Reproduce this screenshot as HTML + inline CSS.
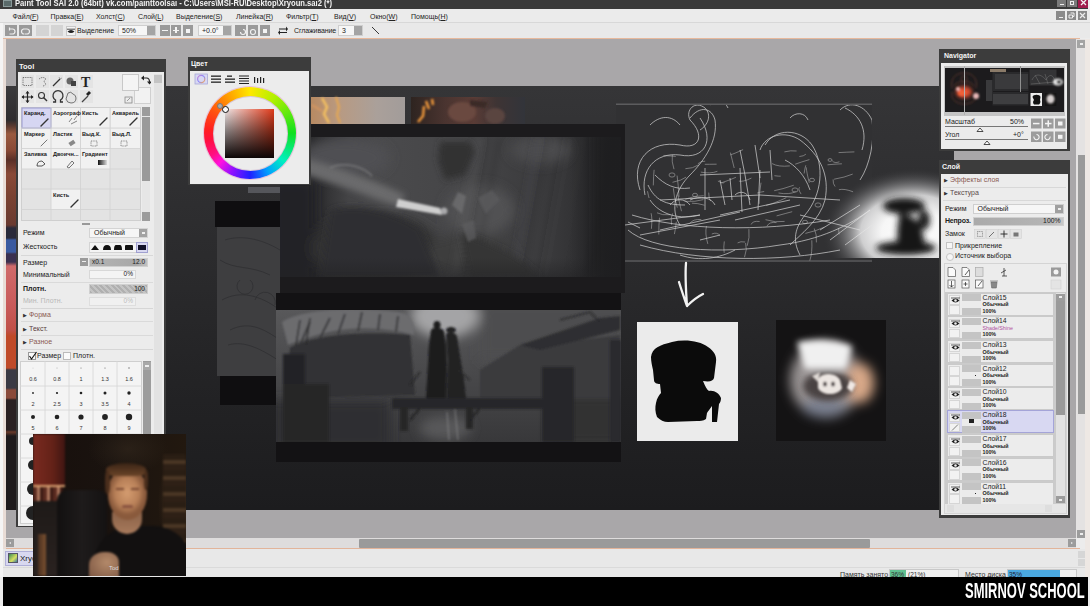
<!DOCTYPE html>
<html><head><meta charset="utf-8">
<style>
*{margin:0;padding:0;box-sizing:border-box}
html,body{width:1090px;height:606px;overflow:hidden;background:#ececec;font-family:"Liberation Sans",sans-serif;font-size:8px;color:#222}
.a{position:absolute}
#title{left:0;top:0;width:1090px;height:9px;background:#3a3a3a;color:#f4f4f4;font-weight:bold;font-size:9px;line-height:8px;white-space:nowrap;overflow:hidden}
#menu{left:0;top:9px;width:1090px;height:14px;background:#ebebeb;border-bottom:1px solid #d8d8d8}
#menu span{position:absolute;top:3.5px;font-size:7px;color:#222}
#tb{left:0;top:23px;width:1090px;height:15px;background:#e9e9e9}
#oline{left:3px;top:38px;width:1077px;height:1px;background:#e6b89c}
#cv{left:6px;top:39px;width:1070px;height:499px;background:#a9a7a9}
#dark{left:6px;top:86px;width:948px;height:424px;background:linear-gradient(#353537,#2b2b2d 40%,#232325 70%,#1c1c1e)}
.panel{background:#3c3c3c}
.ptitle{color:#f4f4f4;font-weight:bold;font-size:7px;position:absolute;left:3px;top:2px}
.pbody{position:absolute;background:#ececec}
#band{left:3px;top:577px;width:1085px;height:29px;background:#000}
#brand{left:965px;top:578px;height:29px;color:#fff;font-weight:bold;font-size:22px;line-height:26px;transform:scaleX(0.59);transform-origin:left center;white-space:nowrap}
</style></head><body>
<div class="a" id="title"><span style="position:absolute;left:3px;top:0;width:9px;height:7px;background:#5a6a6a;border:1px solid #8a9a9a"></span><span style="position:absolute;left:15px;top:-1px;transform:scaleX(.847);transform-origin:left top">Paint Tool SAI 2.0 (64bit) vk.com/painttoolsai - C:\Users\MSI-RU\Desktop\Xryoun.sai2 (*)</span>
<div style="position:absolute;left:1057px;top:0;width:9px;height:7px;background:#7a7a7a"><div style="position:absolute;left:3px;top:3.5px;width:4px;height:1.2px;background:#eee"></div></div><div style="position:absolute;left:1067px;top:0;width:10px;height:7px;background:#7a7a7a"><div style="position:absolute;left:3px;top:1px;width:4px;height:4px;border:1px solid #eee"></div></div><div style="position:absolute;left:1078px;top:0;width:10px;height:8px;background:#a01c4c"><svg style="position:absolute;left:2px;top:0" width="7" height="6"><path d="M1 0 L6 5 M6 0 L1 5" stroke="#f4f4f4" stroke-width="1.3"/></svg></div><div style="position:absolute;left:1088px;top:0;width:2px;height:9px;background:#eee"></div></div>
<div class="a" id="menu">
<span style="left:12.5px">Файл(<u>F</u>)</span><span style="left:50.5px">Правка(<u>E</u>)</span><span style="left:96px">Холст(<u>C</u>)</span><span style="left:138px">Слой(<u>L</u>)</span><span style="left:176px">Выделение(<u>S</u>)</span><span style="left:236px">Линейка(<u>R</u>)</span><span style="left:286px">Фильтр(<u>T</u>)</span><span style="left:334px">Вид(<u>V</u>)</span><span style="left:370px">Окно(<u>W</u>)</span><span style="left:411px">Помощь(<u>H</u>)</span>
<div style="position:absolute;left:1056px;top:2px;width:9px;height:9px;background:#8a8a8a"><div style="position:absolute;left:3px;top:5.5px;width:3.5px;height:1.3px;background:#eee"></div></div><div style="position:absolute;left:1067px;top:2px;width:9px;height:9px;background:#8a8a8a"><svg style="position:absolute;left:1px;top:1px" width="7" height="7"><path d="M2.5 1 h3.5 v3.5 h-1 M1 3 h3.5 v3 h-3.5z" fill="none" stroke="#eee" stroke-width="1"/></svg></div><div style="position:absolute;left:1078px;top:2px;width:9px;height:9px;background:#8a8a8a"><svg style="position:absolute;left:1px;top:1px" width="7" height="7"><path d="M1 1 L6 6 M6 1 L1 6" stroke="#eee" stroke-width="1.2"/></svg></div>
</div>
<div class="a" id="tb">
<div class="a" style="left:5px;top:2px;width:12px;height:11px;background:#9a9a9a"></div>
<div class="a" style="left:19px;top:2px;width:12.5px;height:11px;background:#9a9a9a"></div>
<svg class="a" style="left:7px;top:4px" width="24" height="8"><path d="M2.5 2 h3 a2.5 2.5 0 0 1 0 5 h-3 M2.5 0.5 v3" fill="none" stroke="#eee" stroke-width="1.2"/><path d="M16 2 h4 a2.5 2.5 0 0 1 0 5 h-2.5 M17 2 a2.5 2.5 0 0 0 0 5" fill="none" stroke="#eee" stroke-width="1.2"/></svg>
<div class="a" style="left:36px;top:2px;width:12.5px;height:11px;background:#d4d4d4"></div>
<div class="a" style="left:50.5px;top:2px;width:12.5px;height:11px;background:#d4d4d4"></div>
<div class="a" style="left:66px;top:2.5px;width:10px;height:10.5px;background:#f4f4f4;border:1px solid #c8c8c8"></div>
<svg class="a" style="left:67px;top:5px" width="8" height="7"><path d="M0.5 3.5 q3.5 -3 7 0 q-3.5 3 -7 0z" fill="#222"/><path d="M0 1.2 h8" stroke="#222" stroke-width=".8"/></svg>
<span class="a" style="left:77px;top:4px;font-size:7px">Выделение</span>
<div class="a" style="left:118px;top:2px;width:38px;height:11px;background:#f6f6f6;border:1px solid #cfcfcf"><span class="a" style="left:3px;top:0.5px;font-size:7px">50%</span><div class="a" style="right:0;top:0;width:8px;height:9px;background:#a4a4a4"></div></div>
<div class="a" style="left:159.5px;top:2px;width:10px;height:11px;background:#9a9a9a"><div class="a" style="left:2px;top:4.5px;width:6px;height:1.5px;background:#f4f4f4"></div></div>
<div class="a" style="left:171px;top:2px;width:10px;height:11px;background:#9a9a9a"><div class="a" style="left:2px;top:4.5px;width:6px;height:1.5px;background:#f4f4f4"></div><div class="a" style="left:4.2px;top:2.2px;width:1.5px;height:6px;background:#f4f4f4"></div></div>
<div class="a" style="left:182.5px;top:2px;width:10px;height:11px;background:#9a9a9a"><div class="a" style="left:3px;top:3.5px;width:4px;height:4px;background:#f4f4f4"></div></div>
<div class="a" style="left:198px;top:2px;width:34px;height:11px;background:#f6f6f6;border:1px solid #cfcfcf"><span class="a" style="left:3px;top:0.5px;font-size:7px">+0.0°</span><div class="a" style="right:0;top:0;width:8px;height:9px;background:#a4a4a4"></div></div>
<div class="a" style="left:235px;top:2px;width:11px;height:11px;background:#9a9a9a"></div>
<div class="a" style="left:248px;top:2px;width:10px;height:11px;background:#9a9a9a"></div>
<div class="a" style="left:259.5px;top:2px;width:10px;height:11px;background:#9a9a9a"><div class="a" style="left:3px;top:3.5px;width:4px;height:4px;background:#f4f4f4"></div></div>
<svg class="a" style="left:238px;top:5px" width="30" height="8"><path d="M2.5 4 a2.5 2.5 0 1 0 2.5 -2.5" fill="none" stroke="#f4f4f4" stroke-width="1.1"/><circle cx="15" cy="4" r="2.5" fill="none" stroke="#f4f4f4" stroke-width="1.1"/></svg>
<svg class="a" style="left:278px;top:3px" width="10" height="9"><path d="M1 3 h7 M2 6.5 h7" stroke="#222" stroke-width="1.2"/><path d="M8 0.5 l2 2.5 l-2 2.5z M2 4 l-2 2.5 l2 2.5z" fill="#222"/></svg>
<span class="a" style="left:294px;top:4px;font-size:7px;letter-spacing:-0.1px">Сглаживание</span>
<div class="a" style="left:338px;top:2px;width:25px;height:11px;background:#f6f6f6;border:1px solid #cfcfcf"><span class="a" style="left:3px;top:0.5px;font-size:7px">3</span><div class="a" style="right:0;top:0;width:8px;height:9px;background:#a4a4a4"></div></div>
<svg class="a" style="left:371px;top:3px" width="9" height="9"><path d="M1 1 l7 7" stroke="#222" stroke-width="0.9"/></svg>
</div>
<div class="a" id="oline"></div>
<div class="a" id="cv"></div>

<!-- canvas artwork -->
<div class="a" id="dark"></div>
<div class="a" style="left:6px;top:86px;width:10px;height:424px;background:linear-gradient(#3a3a3c 0,#2e2c2e 34px,#5a3a30 40px,#9a5a40 48px,#8a4a36 64px,#5a3028 74px,#8a4a38 88px,#7a4232 110px,#6a3a30 139px,#2a2a3a 142px,#2a2a3a 152px,#3a5aa0 154px,#3a5aa0 166px,#3a3050 168px,#3a3050 176px,#d06a6a 180px,#c85a5a 220px,#c05048 244px,#c04a28 250px,#c04a28 282px,#3a3a44 284px,#3a3a44 302px,#8a4a3a 304px,#8a4a3a 312px,#2a2022 314px,#2a2022 344px,#6a3a2a 346px,#1e1a1c 350px,#1e1a1c 424px)"></div>
<svg class="a" style="left:0;top:0" width="1090" height="606" viewBox="0 0 1090 606">
<defs>
 <filter id="b1" x="-20%" y="-20%" width="140%" height="140%"><feGaussianBlur stdDeviation="1.2"/></filter>
 <filter id="b2" x="-30%" y="-30%" width="160%" height="160%"><feGaussianBlur stdDeviation="3"/></filter>
 <filter id="b3" x="-50%" y="-50%" width="200%" height="200%"><feGaussianBlur stdDeviation="6"/></filter>
 <radialGradient id="glowA" cx="0.5" cy="0.5" r="0.5"><stop offset="0" stop-color="#fff"/><stop offset=".35" stop-color="#f6f6f6"/><stop offset=".58" stop-color="#cfcfd0"/><stop offset=".8" stop-color="#707072" stop-opacity=".6"/><stop offset="1" stop-color="#333335" stop-opacity="0"/></radialGradient>
 <radialGradient id="glowB" cx="0.5" cy="0.5" r="0.5"><stop offset="0" stop-color="#f0e8e4"/><stop offset=".5" stop-color="#d8c8c0"/><stop offset=".8" stop-color="#6a5a56" stop-opacity=".6"/><stop offset="1" stop-color="#141314" stop-opacity="0"/></radialGradient>
 <linearGradient id="p1base" x1="0" y1="0" x2="1" y2="0"><stop offset="0" stop-color="#222224"/><stop offset=".1" stop-color="#29292b"/><stop offset=".2" stop-color="#444446"/><stop offset=".3" stop-color="#4a4a4c"/><stop offset=".55" stop-color="#454547"/><stop offset=".75" stop-color="#3c3c3e"/><stop offset=".88" stop-color="#303032"/><stop offset="1" stop-color="#262628"/></linearGradient>
 <linearGradient id="p2base" x1="0" y1="0" x2="0" y2="1"><stop offset="0" stop-color="#58585a"/><stop offset=".5" stop-color="#48484a"/><stop offset="1" stop-color="#38383a"/></linearGradient>
 <linearGradient id="fadeB" x1="0" y1="0" x2="0" y2="1"><stop offset="0" stop-color="#222224" stop-opacity="0"/><stop offset="1" stop-color="#222224" stop-opacity=".55"/></linearGradient>
 <linearGradient id="fadeR" x1="0" y1="0" x2="1" y2="0"><stop offset="0" stop-color="#1e1e20" stop-opacity="0"/><stop offset=".7" stop-color="#1e1e20" stop-opacity=".85"/><stop offset="1" stop-color="#1e1e20"/></linearGradient>
 <clipPath id="c1"><rect x="280" y="137" width="341" height="140"/></clipPath>
 <clipPath id="c2"><rect x="276" y="310" width="345" height="132"/></clipPath>
 <clipPath id="c3"><rect x="616" y="105" width="256" height="156"/></clipPath>
 <clipPath id="c4"><rect x="776" y="320" width="110" height="121"/></clipPath>
 <clipPath id="c5"><rect x="820" y="150" width="119" height="108"/></clipPath>
</defs>
<!-- orange thumbs -->
<defs><linearGradient id="th1" x1="0" y1="0" x2="1" y2="0"><stop offset="0" stop-color="#b88a62"/><stop offset=".3" stop-color="#b89a82"/><stop offset=".7" stop-color="#aaa09a"/><stop offset="1" stop-color="#a29c9a"/></linearGradient>
<linearGradient id="th2" x1="0" y1="0" x2="1" y2="0"><stop offset="0" stop-color="#2e2420"/><stop offset=".3" stop-color="#4a3430"/><stop offset=".55" stop-color="#5a3c36"/><stop offset=".75" stop-color="#3e3434"/><stop offset="1" stop-color="#32343a"/></linearGradient></defs>
<rect x="311" y="97" width="94" height="27" fill="url(#th1)"/>
<g filter="url(#b1)"><path d="M322 98 l5 9 l-3 7 l5 9" stroke="#f4c060" stroke-width="2.5" fill="none"/><path d="M336 97 l3 10 l-2 8 l3 8" stroke="#e8a850" stroke-width="2" fill="none"/><path d="M312 105 l10 6" stroke="#d89860" stroke-width="2" fill="none"/></g>
<rect x="411" y="97" width="114" height="27" fill="url(#th2)"/>
<g filter="url(#b1)"><path d="M418 122 l5 -6 l1 -10 M426 101 l3 8 M432 99 l1 6" stroke="#f0983a" stroke-width="2.5" fill="none"/><ellipse cx="462" cy="112" rx="14" ry="10" fill="#6a4840"/><ellipse cx="495" cy="116" rx="10" ry="8" fill="#5a4440"/><path d="M470 100 l18 2 l-3 6 l-15 -2z" fill="#3a2c28"/></g>
<!-- sketch left -->
<rect x="215" y="201" width="65" height="26" fill="#0f0e10"/>
<rect x="217" y="227" width="63" height="149" fill="#3e3e40"/>
<g stroke="#2a2a2c" stroke-width=".7" fill="none" opacity=".8"><path d="M225 240 C240 235 260 238 280 250"/><path d="M222 300 C240 290 260 295 280 310"/><path d="M230 330 C250 320 265 330 280 340 M228 345 C245 340 262 350 278 360"/><path d="M240 280 a8 8 0 1 0 10 0"/><path d="M255 300 a10 10 0 1 1 20 5"/><path d="M220 260 C235 270 250 265 270 275"/></g>
<rect x="220" y="376" width="56" height="29" fill="#0f0e10"/>
<!-- sketch ship -->
<rect x="616" y="104" width="256" height="158" fill="#313133"/>
<rect x="616" y="103.5" width="256" height="1.5" fill="#5c5c5e"/>
<rect x="616" y="260" width="256" height="2" fill="#4e4e50"/>
<!-- glow silhouette -->
<g clip-path="url(#c5)">
<ellipse cx="914" cy="232" rx="92" ry="64" fill="url(#glowA)"/>
<g filter="url(#b2)">
 <ellipse cx="904" cy="206" rx="21" ry="8" fill="#121212"/>
 <ellipse cx="924" cy="220" rx="6" ry="10" fill="#1a1a1a"/>
 <path d="M900 212 C908 216 916 216 920 226 C924 236 926 244 922 248 L898 248 C896 236 898 222 900 212z" fill="#161616"/>
 <ellipse cx="906" cy="248" rx="30" ry="7" fill="#181818"/>
</g>
</g>
<g clip-path="url(#c3)" stroke="#e6e6e6" stroke-width=".75" fill="none" opacity=".85">
<path d="M640 190 C630 160 650 140 680 145 C700 150 705 135 690 120 C685 110 695 100 705 108 C712 115 708 125 700 130"/>
<path d="M645 195 C640 170 655 152 680 155 C705 160 715 140 700 118"/>
<path d="M690 118 C700 105 712 108 715 120 C718 140 705 160 690 175 C675 190 670 210 680 225"/>
<path d="M650 200 C660 215 680 220 700 215"/>
<path d="M655 175 C665 185 675 190 690 188"/>
<path d="M648 185 C655 200 665 205 685 205"/>
<path d="M760 150 C765 135 785 130 800 140 C820 155 830 175 825 200 C820 220 800 235 790 245"/>
<path d="M765 145 C775 128 800 128 812 145 C825 165 822 195 805 215 C795 228 792 240 800 255"/>
<path d="M785 160 C795 165 805 175 810 190"/>
<path d="M840 110 C850 100 865 105 872 120 C875 140 870 165 860 180"/>
<path d="M845 108 C860 115 868 130 862 150"/>
<path d="M628 230 C650 250 720 255 780 245 C820 240 850 225 870 210"/>
<path d="M632 215 C680 230 760 232 830 220"/>
<path d="M640 245 C700 262 780 262 840 250"/>
<path d="M660 200 L760 195 L840 200"/>
<path d="M700 175 L770 172 M705 168 L705 210 M740 168 L742 212 M760 170 L758 210"/>
<path d="M720 180 L725 205 M730 178 L732 200 M745 175 L750 205"/>
<path d="M740 150 L745 175 M755 145 L760 178 M770 150 L772 180"/>
<path d="M625 225 L700 215 M640 235 L720 220 M660 230 L740 212"/>
<path d="M720 215 L790 200 M735 220 L800 205"/>
<path d="M820 230 L860 205 M830 240 L870 210 M845 245 L872 225"/>
<path d="M800 215 L840 225 L860 230"/>
<path d="M628 222 L640 228 M700 240 L720 235"/>
<path d="M690 200 C700 195 712 198 715 205 M670 205 C675 198 685 198 690 205"/>
<path d="M735 195 C740 190 748 192 750 200"/>
<path d="M650 125 C660 115 672 115 680 125 M710 105 C715 100 725 100 728 108"/>
<path d="M790 118 C795 112 805 112 808 120"/>
<path d="M680 255 C700 262 720 258 735 250"/>
</g><g clip-path="url(#c3)" stroke="#dcdcdc" stroke-width=".6" fill="none" opacity=".7">
<path d="M704.8 164.3 Q708.0 164.3 716.6 164.2"/>
<path d="M647.5 191.2 Q648.7 197.3 649.1 198.0"/>
<path d="M766.1 205.4 Q773.5 203.7 786.3 197.7"/>
<path d="M697.9 163.7 Q702.0 160.6 705.2 161.2"/>
<path d="M659.5 217.7 Q658.7 225.0 658.8 234.5"/>
<path d="M757.1 193.1 Q759.5 192.2 764.2 191.5"/>
<path d="M708.7 192.6 Q708.7 199.4 710.7 201.0"/>
<path d="M724.3 241.4 Q723.4 247.1 724.2 252.8"/>
<path d="M799.4 156.5 Q803.9 156.2 805.9 154.2"/>
<path d="M838.6 228.1 Q838.6 229.3 839.1 234.4"/>
<path d="M663.4 155.6 Q672.1 156.0 675.8 156.4"/>
<path d="M673.3 188.2 Q673.9 197.4 677.3 207.6"/>
<path d="M711.8 234.0 Q716.9 231.8 720.0 235.5"/>
<path d="M806.2 167.3 Q806.7 172.8 809.3 182.8"/>
<path d="M811.8 240.3 Q812.5 252.7 809.8 260.6"/>
<path d="M799.6 187.3 Q797.7 188.9 801.1 194.1"/>
<path d="M672.5 182.3 Q682.0 180.4 686.1 177.1"/>
<path d="M654.1 169.8 Q653.5 175.3 653.3 185.4"/>
<path d="M737.6 242.9 Q740.5 241.1 745.2 242.0"/>
<path d="M805.8 165.3 Q805.2 166.6 804.1 173.5"/>
<path d="M745.6 243.0 Q747.5 249.2 744.5 257.2"/>
<path d="M684.6 201.4 Q695.9 202.0 703.4 199.6"/>
<path d="M685.3 199.2 Q694.3 195.6 703.7 195.7"/>
<path d="M761.0 182.7 Q759.3 191.6 759.1 203.9"/>
<path d="M685.4 168.7 Q692.9 168.6 698.5 164.9"/>
<path d="M657.0 212.8 Q661.8 215.5 670.5 214.7"/>
<path d="M706.5 226.1 Q704.7 233.0 707.8 243.9"/>
<path d="M838.6 152.6 Q847.1 152.1 854.4 151.9"/>
<path d="M827.5 164.8 Q837.3 163.9 841.9 163.8"/>
<path d="M814.3 228.5 Q816.9 234.4 816.4 242.4"/>
<path d="M748.9 229.2 Q749.9 237.6 747.2 245.8"/>
<path d="M805.4 233.4 Q816.6 230.9 824.4 227.1"/>
<path d="M795.2 164.2 Q801.2 162.0 809.4 159.6"/>
<path d="M751.1 224.5 Q752.6 220.6 759.6 221.5"/>
<path d="M730.4 152.6 Q732.3 160.4 734.2 168.0"/>
<path d="M778.5 193.0 Q789.4 194.9 795.7 191.6"/>
<path d="M691.9 203.2 Q697.5 203.1 704.4 205.2"/>
<path d="M774.2 190.7 Q782.0 189.3 793.8 185.2"/>
<path d="M772.1 163.6 Q778.5 167.1 789.8 165.9"/>
<path d="M672.6 213.4 Q670.3 218.0 671.6 224.8"/>
<path d="M784.4 151.9 Q790.6 150.2 796.6 151.0"/>
<path d="M832.2 160.7 Q834.4 163.7 839.4 161.8"/>
<path d="M676.3 221.8 Q675.6 228.1 674.4 234.1"/>
<path d="M738.9 181.1 Q742.6 182.2 751.4 178.1"/>
<path d="M766.9 226.2 Q769.4 221.5 776.5 222.6"/>
<path d="M838.9 189.7 Q844.4 188.4 853.1 191.8"/>
<path d="M672.3 154.8 Q671.4 161.7 674.0 169.2"/>
<path d="M774.4 175.7 Q778.9 176.3 780.7 176.2"/>
<path d="M677.9 195.1 Q679.9 205.5 681.5 211.2"/>
<path d="M834.1 179.2 Q844.6 177.5 852.7 174.1"/>
<path d="M720.9 183.0 Q730.7 179.7 735.9 177.3"/>
<path d="M651.1 213.2 Q652.4 218.3 651.4 228.8"/>
<path d="M677.1 175.6 Q678.3 184.8 679.0 197.0"/>
<path d="M833.1 179.4 Q832.8 183.9 835.1 186.5"/>
<path d="M689.6 223.7 Q692.7 218.8 701.3 219.5"/>
<path d="M700.8 172.1 Q710.4 174.0 717.4 171.3"/>
<path d="M717.9 181.0 Q723.2 184.0 724.5 182.3"/>
<path d="M765.5 219.7 Q775.5 222.9 784.6 221.4"/>
<path d="M776.6 215.9 Q787.2 213.0 792.2 211.7"/>
<path d="M730.3 154.8 Q733.7 154.0 743.1 149.6"/>
<path d="M669 175 a3 2.0999999999999996 0 1 0 6 0 a3 2.0999999999999996 0 1 0 -6 0"/>
<path d="M692.5 195 a2.5 1.75 0 1 0 5.0 0 a2.5 1.75 0 1 0 -5.0 0"/>
<path d="M792 190 a3 2.0999999999999996 0 1 0 6 0 a3 2.0999999999999996 0 1 0 -6 0"/>
<path d="M809.5 180 a2.5 1.75 0 1 0 5.0 0 a2.5 1.75 0 1 0 -5.0 0"/>
<path d="M815 205 a3 2.0999999999999996 0 1 0 6 0 a3 2.0999999999999996 0 1 0 -6 0"/>
<path d="M802.5 222 a2.5 1.75 0 1 0 5.0 0 a2.5 1.75 0 1 0 -5.0 0"/>
<path d="M828 160 a2 1.4 0 1 0 4 0 a2 1.4 0 1 0 -4 0"/>
</g>
<!-- image1 -->
<rect x="280" y="124" width="345" height="169" fill="#1c1b1d"/>
<g clip-path="url(#c1)">
<rect x="280" y="137" width="342" height="140" fill="url(#p1base)"/>
<g filter="url(#b3)">
 <rect x="270" y="180" width="45" height="110" fill="#242426"/>
 <ellipse cx="345" cy="158" rx="45" ry="20" fill="#505052"/>
 <ellipse cx="540" cy="150" rx="30" ry="14" fill="#4c4c4e"/>
 <ellipse cx="375" cy="248" rx="65" ry="34" fill="#303032"/>
 <rect x="595" y="130" width="35" height="150" fill="#222224"/>
 <ellipse cx="470" cy="255" rx="45" ry="22" fill="#3c3c3e"/>
 <ellipse cx="480" cy="210" rx="35" ry="25" fill="#515153"/>
</g>
<g filter="url(#b2)"><path d="M533 137 L540 137 L515 277 L508 277z" fill="#151517" opacity="0.11"/><path d="M535 137 L541 137 L516 277 L510 277z" fill="#707072" opacity="0.09"/><path d="M496 137 L502 137 L477 277 L471 277z" fill="#151517" opacity="0.09"/><path d="M581 137 L585 137 L560 277 L556 277z" fill="#707072" opacity="0.06"/><path d="M483 137 L491 137 L466 277 L458 277z" fill="#151517" opacity="0.10"/><path d="M476 137 L485 137 L460 277 L451 277z" fill="#707072" opacity="0.12"/><path d="M562 137 L568 137 L543 277 L537 277z" fill="#151517" opacity="0.05"/><path d="M472 137 L478 137 L453 277 L447 277z" fill="#707072" opacity="0.04"/><path d="M497 137 L501 137 L476 277 L472 277z" fill="#151517" opacity="0.04"/><path d="M535 137 L541 137 L516 277 L510 277z" fill="#707072" opacity="0.11"/><path d="M543 137 L550 137 L525 277 L518 277z" fill="#151517" opacity="0.08"/><path d="M563 137 L568 137 L543 277 L538 277z" fill="#707072" opacity="0.06"/><path d="M610 137 L619 137 L594 277 L585 277z" fill="#151517" opacity="0.11"/><path d="M569 137 L574 137 L549 277 L544 277z" fill="#707072" opacity="0.06"/></g>
<g filter="url(#b2)">
 <path d="M305 158 C330 165 370 178 405 195 L400 207 C365 195 330 182 300 172z" fill="#6a6a6c"/>
 <path d="M330 210 C355 202 392 210 420 228 L440 277 L320 277z" fill="#2f2f31"/>
 <path d="M440 142 L470 142 L475 152 L465 175 L445 180 L438 160z" fill="#303032"/>
 <path d="M460 232 C480 240 520 252 540 277 L470 277z" fill="#343436"/>
</g>
<g filter="url(#b1)">
 <path d="M398 199 L440 208 L442 215 L396 207z" fill="#cfcfcf"/>
 <circle cx="444" cy="211" r="3.5" fill="#a8a8aa"/>
 <path d="M452 205 L458 192 L466 196 L462 214z" fill="#6e6e70" opacity=".8"/>
 <path d="M478 198 L492 190 L500 200 L486 214z" fill="#5a5a5c" opacity=".8"/>
 <path d="M462 224 L474 220 L476 238 L468 242z" fill="#5e5e60" opacity=".7"/>
 <path d="M330 168 C345 160 365 168 372 176" stroke="#808082" stroke-width="2" fill="none" opacity=".6"/>
</g>
<rect x="280" y="258" width="342" height="19" fill="url(#fadeB)"/>
<rect x="570" y="137" width="52" height="140" fill="url(#fadeR)"/>
</g>
<!-- image2 -->
<rect x="276" y="293" width="345" height="169" fill="#131214"/>
<g clip-path="url(#c2)">
<rect x="276" y="310" width="345" height="132" fill="url(#p2base)"/>
<g filter="url(#b3)">
 <ellipse cx="445" cy="316" rx="34" ry="22" fill="#a4a4a6"/>
 <rect x="480" y="300" width="150" height="60" fill="#4e4e50"/>
 <ellipse cx="445" cy="428" rx="26" ry="12" fill="#58585a"/>
 <rect x="270" y="400" width="120" height="50" fill="#2e2e30"/>
 <rect x="550" y="395" width="80" height="50" fill="#303032"/>
</g>
<g filter="url(#b1)">
 <path d="M282 322 C300 310 350 306 398 312 C410 314 415 320 414 335 C395 330 370 326 340 330 C320 333 300 340 288 345z" fill="#6c6c6e"/>
 <g stroke="#3a3a3c" stroke-width="2"><path d="M300 345 L310 322 M320 338 L330 318 M338 334 L345 314 M358 331 L362 312 M378 330 L380 314 M396 332 L398 316"/></g>
 <path d="M290 348 C310 336 360 330 410 335 L415 395 L300 398 C292 380 288 365 290 348z" fill="#323234"/>
 <path d="M300 320 L296 345 M310 318 L306 345" stroke="#2a2a2c" stroke-width="1.5"/>
 <path d="M480 370 L520 345 L580 340 L620 335 L620 398 L480 398z" fill="#3a3a3c"/>
 <path d="M520 345 L600 318 L620 316 L620 330 L540 350z" fill="#2e2e30"/>
 <path d="M560 320 L590 312 L600 322" stroke="#2a2a2c" stroke-width="1.5" fill="none"/>
</g>
<g filter="url(#b1)">
 <ellipse cx="437" cy="325" rx="3.5" ry="4" fill="#1c1c1e"/>
 <path d="M431 330 C433 327 441 327 444 331 L446 345 L447 370 L446 399 L426 399 L428 365 L429 345z" fill="#1c1c1e"/>
 <ellipse cx="451" cy="330" rx="5" ry="3" fill="#202022"/>
 <path d="M446 334 C449 331 455 332 457 336 L459 350 L464 380 L466 399 L447 399 L448 360z" fill="#202022"/>
 <path d="M420 372 L410 385 M458 370 L470 380" stroke="#2a2a2c" stroke-width="1.5"/>
 <rect x="392" y="398" width="156" height="11" fill="#28282a"/>
 <rect x="400" y="407" width="8" height="24" fill="#252527"/><rect x="466" y="407" width="7" height="22" fill="#252527"/>
 <path d="M410 420 L420 408 M470 420 L480 408" stroke="#252527" stroke-width="2"/>
 <rect x="283" y="354" width="22" height="88" fill="#232325"/><rect x="283" y="384" width="46" height="58" fill="#252527"/>
 <rect x="542" y="367" width="32" height="75" fill="#28282a"/>
 <rect x="610" y="340" width="11" height="102" fill="#2c2c2e"/>
 <path d="M455 410 L458 440 M447 412 L449 440" stroke="#8a8a8c" stroke-width="1.2" opacity=".7"/>
</g>
</g>
<!-- white square -->
<rect x="637" y="322" width="101" height="119" fill="#ebebeb"/>
<path d="M651 357 C652 348 660 345 672 342 C685 339 700 341 708 347 C714 351 717 356 716 362 L714 378 C713 381 710 382 703 381 C705 386 707 390 709 391 C714 390 719 393 721 398 C721 401 720 403 719 404 L717 422 L712 422 L712 406 C710 409 708 411 707 413 L706 419 C703 421 700 421 697 421 L668 422 C664 422 660 420 657 417 C655 412 655 407 656 403 C657 398 659 395 661 393 L660 384 C657 384 654 383 654 380 L653 370 C652 366 651 361 651 357z" fill="#0b0b0b"/>
<!-- dark square glow -->
<rect x="776" y="320" width="110" height="121" fill="#141314"/>
<g clip-path="url(#c4)">
<g filter="url(#b3)">
 <ellipse cx="826" cy="380" rx="36" ry="38" fill="#9a9494"/>
 <ellipse cx="860" cy="383" rx="14" ry="20" fill="#d8a888"/>
 <ellipse cx="824" cy="407" rx="22" ry="10" fill="#7a8090"/>
</g>
<g filter="url(#b2)">
 <path d="M797 342 C815 338 838 340 852 346 L846 369 L805 369z" fill="#f0f0f0"/>
 <ellipse cx="828" cy="386" rx="25" ry="15" fill="#4a4242"/>
</g>
<g filter="url(#b1)">
 <path d="M818 380 C820 372 836 372 840 380 L842 388 C838 396 822 396 818 388z" fill="#ece6e2"/>
 <ellipse cx="825" cy="384" rx="2" ry="2.5" fill="#4a4242"/><ellipse cx="833" cy="384" rx="2" ry="2.5" fill="#4a4242"/>
 <path d="M812 376 L820 372 L818 382z" fill="#e0dad6"/>
 <path d="M850 380 L856 384 L852 392 L847 388z" fill="#f0e8e4"/>
</g>
</g>
<!-- arrow -->
<path d="M686 263 C685 275 686 292 687 306 M679 282 C682 292 685 300 687 306 C692 301 697 297 703 294" stroke="#f2f2f2" stroke-width="2.3" fill="none" stroke-linecap="round" stroke-linejoin="round"/>
</svg>
<!-- Tool panel -->
<div class="a panel" style="left:16px;top:59px;width:150px;height:468px"><span class="ptitle" style="top:3px;font-size:7.5px">Tool</span></div>
<div class="a pbody" style="left:18px;top:72px;width:146px;height:454px"></div>
<div class="a" id="toolc">
<!-- tool icons -->
<svg class="a" style="left:18px;top:72px" width="146" height="34" viewBox="0 0 146 34">
<g fill="#e4e4e4"><rect x="3" y="3" width="13" height="13"/><rect x="18" y="3" width="13" height="13"/><rect x="32" y="3" width="13" height="13"/><rect x="47" y="3" width="13" height="13"/><rect x="62" y="3" width="13" height="13"/>
<rect x="3" y="18" width="13" height="13"/><rect x="18" y="18" width="13" height="13"/><rect x="32" y="18" width="13" height="13"/><rect x="47" y="18" width="13" height="13"/><rect x="62" y="18" width="13" height="13"/></g>
<rect x="5" y="5.5" width="9" height="8" fill="none" stroke="#555" stroke-width="0.8" stroke-dasharray="1.2 1"/>
<path d="M21 7 q4 -3 7 0 q-3 2 -1 4 q2 2 -2 3" fill="none" stroke="#555" stroke-width="0.8" stroke-dasharray="1.2 0.8"/>
<path d="M35 14 L42 7" stroke="#333" stroke-width="1.3"/><path d="M41 5 l1 2 M44 6 l-2 1" stroke="#777" stroke-width="0.6"/>
<circle cx="52" cy="9" r="3.5" fill="#666"/><rect x="53" y="9" width="5" height="5" fill="#444"/>
<text x="63" y="15" font-family="Liberation Serif" font-size="14" font-weight="bold" fill="#222">T</text>
<path d="M9.5 19.5 v11 M4 25 h11" stroke="#222" stroke-width="1.2"/><path d="M9.5 19 l-2 2.5 h4z M9.5 31 l-2 -2.5 h4z M3.5 25 l2.5 -2 v4z M15.5 25 l-2.5 -2 v4z" fill="#222"/>
<circle cx="23.5" cy="23.5" r="3" fill="none" stroke="#333" stroke-width="1.1"/><path d="M25.5 25.5 l3.5 3.5" stroke="#333" stroke-width="1.4"/>
<path d="M35 30 h2.5 v-2 a5 5 0 1 1 5 0 v2 h2.5" fill="none" stroke="#333" stroke-width="1.3"/>
<path d="M50 21 q3 -2 5 1 q3 1 3 4 q0 5 -5 5 q-4 0 -5 -4z" fill="none" stroke="#666" stroke-width="0.9"/>
<path d="M64 30 l6 -6" stroke="#444" stroke-width="1.2"/><path d="M68 22 l3 -3 l2 2 l-3 3z" fill="#222"/>
</svg>
<!-- fg/bg swatches -->
<div class="a" style="left:134px;top:87px;width:17px;height:17px;background:#f2f2f2;border:1px solid #d0d0d0"></div>
<div class="a" style="left:122px;top:74px;width:17px;height:17px;background:#f4f4f4;border:1px solid #c8c8c8"></div>
<svg class="a" style="left:141px;top:75px" width="10" height="10"><path d="M1.5 3 h4 q3 0 3 4" fill="none" stroke="#222" stroke-width="1.2"/><path d="M0 3 l3 -2.5 v5z M8.5 9.5 l-2.5 -3 h5z" fill="#222"/></svg>
<svg class="a" style="left:124px;top:95px" width="9" height="9"><rect x="1" y="2" width="7" height="6" fill="none" stroke="#888" stroke-width="0.8"/><path d="M3 6 l3 -3" stroke="#888" stroke-width="0.8"/></svg>
<!-- tool panel scrollbar -->
<div class="a" style="left:154px;top:74px;width:8px;height:450px;background:#e2e2e2"></div>
<div class="a" style="left:154px;top:75px;width:8px;height:8px;background:#c4c4c4"></div>
<!-- brush grid -->
<div class="a" style="left:21px;top:107px;width:120px;height:114px;background:#e3e3e3;border:1px solid #cfcfcf"></div>
<svg class="a" style="left:21px;top:107px" width="120" height="114" viewBox="0 0 120 114">
<g fill="#f1f1f1"><rect x="30" y="1" width="29" height="20"/><rect x="60" y="1" width="29" height="20"/><rect x="90" y="1" width="29" height="20"/>
<rect x="1" y="21.5" width="29" height="20"/><rect x="30" y="21.5" width="29" height="20"/><rect x="60" y="21.5" width="29" height="20"/><rect x="90" y="21.5" width="29" height="20"/>
<rect x="1" y="42" width="29" height="20"/><rect x="30" y="42" width="29" height="20"/><rect x="60" y="42" width="29" height="20"/><rect x="30" y="82.5" width="29" height="20"/></g>
<rect x="1" y="1" width="29" height="20" fill="#d6d6f2" stroke="#9a9ad0" stroke-width="1"/>
<g stroke="#d2d2d2" stroke-width="0.8"><path d="M30 0v114M59.5 0v114M89 0v114M0 21h120M0 41.5h120M0 62h120M0 82h120M0 102.5h120"/></g>
<g font-size="5.6" font-weight="bold" fill="#222" font-family="Liberation Sans">
<text x="3" y="8">Каранд.</text><text x="32" y="8">Аэрограф</text><text x="61" y="8">Кисть</text><text x="91" y="8">Акварель</text>
<text x="3" y="28.5">Маркер</text><text x="32" y="28.5">Ластик</text><text x="61" y="28.5">Выд.К.</text><text x="91" y="28.5">Выд.Л.</text>
<text x="3" y="49">Заливка</text><text x="32" y="49">Двоичн...</text><text x="61" y="49">Градиент</text>
<text x="32" y="89.5">Кисть</text></g>
<g stroke="#333" stroke-width="1.4" stroke-linecap="round"><path d="M20 19 l7 -7"/><path d="M79 18 l7 -7"/><path d="M109 18 l7 -7"/><path d="M50 100 l7 -7"/><path d="M20 39 l6 -6" stroke="#777" stroke-width="1"/></g>
<path d="M48 15 l3 -4 M50 17 l6 -3 M53 13 l3 -4" stroke="#555" stroke-width="0.7"/>
<rect x="48" y="34" width="6" height="4" fill="#888" transform="rotate(-35 51 36)"/>
<rect x="70" y="34" width="6" height="5" fill="none" stroke="#444" stroke-width="0.6" stroke-dasharray="1 0.7"/><rect x="100" y="34" width="6" height="5" fill="none" stroke="#444" stroke-width="0.6" stroke-dasharray="1 0.7"/>
<path d="M16 59 q0 -5 5 -5 l3 3 q-2 3 -8 2z" fill="none" stroke="#444" stroke-width="0.9"/>
<path d="M46 60 l5 -6 l2 2 l-5 5z" fill="none" stroke="#555" stroke-width="0.8"/>
<rect x="77" y="53" width="9" height="5" fill="url(#gr1)"/>
<defs><linearGradient id="gr1"><stop offset="0" stop-color="#111"/><stop offset="1" stop-color="#ddd"/></linearGradient></defs>
</svg>
<div class="a" style="left:142px;top:107px;width:8px;height:114px;background:#e6e6e6"></div>
<div class="a" style="left:142px;top:107px;width:8px;height:9px;background:#9c9c9c"></div>
<div class="a" style="left:142px;top:117px;width:8px;height:64px;background:#9a9a9a"></div>
<div class="a" style="left:142px;top:212px;width:8px;height:9px;background:#9c9c9c"></div>
<div class="a" style="left:82px;top:223px;width:8px;height:2px;background:#999"></div>
</div>

<!-- tool settings -->
<div class="a" style="left:18px;top:226.5px;width:136px;height:300px;font-size:7px;color:#222">
<span class="a" style="left:5px;top:2px">Режим</span>
<div class="a" style="left:71px;top:1px;width:59px;height:10px;background:#f6f6f6;border:1px solid #d4d4d4"><span class="a" style="left:4px;top:0px">Обычный</span><div class="a" style="right:0;top:0;width:8px;height:8px;background:#a2a2a2"><div class="a" style="left:3px;top:3px;width:3px;height:2px;background:#eee"></div></div></div>
<span class="a" style="left:5px;top:16px">Жесткость</span>
<svg class="a" style="left:71px;top:15px" width="59" height="11" viewBox="0 0 59 11"><rect x="0.5" y="0.5" width="58" height="10" fill="#f4f4f4" stroke="#d4d4d4"/><rect x="47.5" y="0.5" width="11" height="10" fill="#d8d8f0" stroke="#a0a0d0"/>
<path d="M2 8 L6 3 L10 8z" fill="#111"/><path d="M14 8 q0 -5 4 -5 q4 0 4 5z" fill="#111"/><path d="M25 8 q0 -5 2 -5 h4 q2 0 2 5z" fill="#111"/><path d="M36 8 v-4 q0 -1 1 -1 h6 q1 0 1 1 v4z" fill="#111"/><rect x="49" y="3" width="8" height="5" fill="#101028"/></svg>
<div class="a" style="left:3px;top:28px;width:132px;height:1px;background:#d8d8d8"></div>
<span class="a" style="left:5px;top:32px">Размер</span>
<div class="a" style="left:62px;top:31px;width:8px;height:8px;background:#9a9a9a"><div class="a" style="left:2px;top:3px;width:4px;height:1px;background:#eee"></div></div>
<div class="a" style="left:71px;top:31px;width:59px;height:9px;background:linear-gradient(90deg,#b4b4b4,#a8a8a8 80%,#c0c0c0);border:1px solid #cfcfcf"><span class="a" style="left:2px;top:-0.5px;font-size:6.5px">x0.1</span><span class="a" style="right:2px;top:-0.5px;font-size:6.5px">12.0</span></div>
<span class="a" style="left:5px;top:44px">Минимальный</span>
<div class="a" style="left:71px;top:43px;width:47px;height:9px;background:#f4f4f4;border:1px solid #d8d8d8"><span class="a" style="right:2px;top:-0.5px;font-size:6.5px">0%</span></div>
<div class="a" style="left:3px;top:55px;width:132px;height:1px;background:#dadada"></div>
<span class="a" style="left:5px;top:58px;font-weight:bold">Плотн.</span>
<div class="a" style="left:71px;top:57px;width:59px;height:10px;background:repeating-linear-gradient(45deg,#b0b0b0 0 2px,#c4c4c4 2px 4px);border:1px solid #d0d0d0"><span class="a" style="right:2px;top:0px;font-size:6.5px">100</span></div>
<span class="a" style="left:5px;top:70px;color:#b8b8b8">Мин. Плотн.</span>
<div class="a" style="left:71px;top:70px;width:47px;height:9px;background:#f0f0f0;border:1px solid #dedede"><span class="a" style="right:2px;top:-0.5px;font-size:6.5px;color:#bbb">0%</span></div>
<div class="a" style="left:3px;top:81px;width:132px;height:1px;background:#d6d6d6"></div>
<span class="a" style="left:5px;top:86px;font-size:4.5px;color:#333">&#9654;</span><span class="a" style="left:11px;top:84.5px;color:#8a5a52">Форма</span>
<div class="a" style="left:3px;top:94px;width:132px;height:1px;background:#dadada"></div>
<span class="a" style="left:5px;top:100px;font-size:4.5px;color:#333">&#9654;</span><span class="a" style="left:11px;top:98px;color:#5a4040">Текст.</span>
<div class="a" style="left:3px;top:108px;width:132px;height:1px;background:#dadada"></div>
<span class="a" style="left:5px;top:113.5px;font-size:4.5px;color:#333">&#9654;</span><span class="a" style="left:11px;top:111.5px;color:#8a5a52">Разное</span>
<div class="a" style="left:3px;top:122px;width:132px;height:1px;background:#d6d6d6"></div>
<div class="a" style="left:10px;top:125px;width:8px;height:8px;background:#fafafa;border:1px solid #999"></div><svg class="a" style="left:10px;top:124px" width="9" height="9"><path d="M1.5 5 l2 3 l5 -7" fill="none" stroke="#111" stroke-width="1.1"/></svg>
<span class="a" style="left:19px;top:125px">Размер</span>
<div class="a" style="left:45px;top:125px;width:8px;height:8px;background:#fafafa;border:1px solid #bbb"></div>
<span class="a" style="left:55px;top:125px">Плотн.</span>
</div>
<!-- size grid -->
<div class="a" style="left:20px;top:361px;width:122px;height:163px;background:#f4f4f4;border:1px solid #cfcfcf"></div>
<svg class="a" style="left:20px;top:361px" width="122" height="163" viewBox="0 0 122 163">
<g stroke="#d6d6d6" stroke-width="0.8"><path d="M25 0v163M49 0v163M73 0v163M97 0v163M0 25h122M0 49h122M0 73h122M0 97h122M0 121h122M0 145h122"/></g>
<g fill="#666"><circle cx="13" cy="7" r="0.3"/><circle cx="37" cy="7" r="0.4"/><circle cx="61" cy="7" r="0.5"/><circle cx="85" cy="7" r="0.6"/><circle cx="109" cy="7" r="0.7"/></g>
<g fill="#222"><circle cx="13" cy="32" r="0.9"/><circle cx="37" cy="32" r="1.1"/><circle cx="61" cy="32" r="1.3"/><circle cx="85" cy="32" r="1.5"/><circle cx="109" cy="32" r="1.7"/>
<circle cx="13" cy="56" r="2"/><circle cx="37" cy="56" r="2.3"/><circle cx="61" cy="56" r="2.6"/><circle cx="85" cy="56" r="2.9"/><circle cx="109" cy="56" r="3.2"/>
<circle cx="13" cy="80" r="4"/><circle cx="13" cy="104" r="5"/><circle cx="13" cy="128" r="6"/><circle cx="13" cy="152" r="7"/></g>
<g font-size="5.5" fill="#333" text-anchor="middle" font-family="Liberation Sans"><text x="13" y="20">0.6</text><text x="37" y="20">0.8</text><text x="61" y="20">1</text><text x="85" y="20">1.3</text><text x="109" y="20">1.6</text>
<text x="13" y="45">2</text><text x="37" y="45">2.5</text><text x="61" y="45">3</text><text x="85" y="45">3.5</text><text x="109" y="45">4</text>
<text x="13" y="69">5</text><text x="37" y="69">6</text><text x="61" y="69">7</text><text x="85" y="69">8</text><text x="109" y="69">9</text></g>
</svg>
<div class="a" style="left:143px;top:361px;width:8px;height:163px;background:#9c9c9c"></div>
<div class="a" style="left:143px;top:362px;width:8px;height:8px;background:#a8a8a8"><div class="a" style="left:2px;top:3px;width:4px;height:2px;background:#eee"></div></div>

<!-- Color panel -->
<div class="a panel" style="left:188px;top:57px;width:123px;height:128px"><span class="ptitle" style="top:3px">Цвет</span></div>
<div class="a pbody" style="left:190px;top:71px;width:119px;height:113px"></div>
<svg class="a" style="left:190px;top:71px" width="119" height="16" viewBox="0 0 119 16">
<rect x="5" y="3" width="12.5" height="10" fill="#d8d8f4" stroke="#a8a8d8" stroke-width="0.8"/>
<circle cx="11.2" cy="8" r="3.6" fill="none" stroke="url(#hg)" stroke-width="1.2"/>
<defs><linearGradient id="hg" x1="0" y1="0" x2="1" y2="1"><stop offset="0" stop-color="#c8c"/><stop offset=".5" stop-color="#88f"/><stop offset="1" stop-color="#fa4"/></linearGradient></defs>
<g fill="#222"><rect x="21" y="4.5" width="10" height="1.3"/><rect x="21" y="7.5" width="10" height="1.3"/><rect x="21" y="10.5" width="10" height="1.3"/>
<rect x="37" y="4.5" width="5" height="1.3"/><rect x="35" y="7.5" width="10" height="1.3"/><rect x="35" y="10.5" width="10" height="1.3"/>
<rect x="49" y="4.5" width="10" height="1"/><rect x="49" y="7" width="10" height="1"/><rect x="49" y="9.5" width="10" height="1"/><rect x="49" y="12" width="10" height="1"/>
<rect x="64" y="6" width="1.2" height="6"/><rect x="67" y="7" width="1.2" height="5"/><rect x="70" y="6" width="1.2" height="6"/><rect x="73" y="7" width="1.2" height="5"/></g>
</svg>
<div class="a" style="left:204px;top:87px;width:92px;height:92px;border-radius:50%;background:conic-gradient(from -120deg,#ff1080 0deg,#ff1040 20deg,#ff2020 35deg,#ff5010 60deg,#ffa000 90deg,#ffe800 120deg,#b0f000 155deg,#10e020 210deg,#00f0c0 250deg,#00a0ff 275deg,#2020ff 300deg,#9010ff 325deg,#ff10e0 345deg,#ff1080 360deg);box-shadow:0 0 0 1px #e8c0d8"></div>
<div class="a" style="left:213.5px;top:96.5px;width:73px;height:73px;border-radius:50%;background:#ececec;box-shadow:0 0 0 1px #d8c8d8"></div>
<div class="a" style="left:225px;top:109px;width:49px;height:49px;background:linear-gradient(rgba(0,0,0,0),rgba(0,0,0,.45) 45%,#0c0606),linear-gradient(90deg,#efe6e6,#e03a1a)"></div>
<div class="a" style="left:222px;top:106px;width:7px;height:7px;border-radius:50%;border:1.6px solid #111;background:#fafafa"></div>
<div class="a" style="left:216.5px;top:103px;width:6px;height:6px;border-radius:50%;border:1.2px solid #777;background:#aaa"></div>
<div class="a" style="left:248px;top:187px;width:32px;height:6px;background:#55565b"></div>
<!-- Navigator -->
<div class="a panel" style="left:939px;top:49px;width:131px;height:102px"><span class="ptitle" style="top:3px;left:5px">Navigator</span></div>
<div class="a pbody" style="left:941px;top:63px;width:126px;height:86px"></div>
<div class="a" style="left:943.5px;top:65.5px;width:121px;height:50px;background:#c4c4c4"></div>
<svg class="a" style="left:945px;top:68px" width="119" height="44" viewBox="945 68 119 44">
<defs><filter id="nb" x="-50%" y="-50%" width="200%" height="200%"><feGaussianBlur stdDeviation="0.8"/></filter><filter id="nb2" x="-50%" y="-50%" width="200%" height="200%"><feGaussianBlur stdDeviation="2"/></filter></defs>
<rect x="945" y="68" width="119" height="44" fill="#1c1b1d"/>
<g fill="none" stroke="#6a3a32" stroke-width="0.8" filter="url(#nb)"><path d="M952 88 C950 78 956 73 964 73 C972 73 978 78 976 88 M954 86 C956 80 972 80 974 86 M952 92 C950 100 958 104 964 104 C972 104 978 100 976 92"/><circle cx="964" cy="79" r="3"/></g>
<g filter="url(#nb2)"><ellipse cx="964" cy="92" rx="8" ry="6" fill="#e05030"/></g>
<g filter="url(#nb)"><circle cx="976" cy="96" r="3" fill="#e8b8b8"/><circle cx="958" cy="89" r="2" fill="#f0c0c0"/><ellipse cx="962" cy="93" rx="4" ry="3" fill="#f06038"/></g>
<rect x="990" y="69" width="16" height="3" fill="#8a7a68"/>
<rect x="986" y="80" width="6.5" height="21" fill="#3a3a3c"/>
<rect x="992.5" y="72" width="36" height="19" fill="#2a2a2c"/>
<rect x="995" y="74" width="33" height="15" fill="#3a3a3c"/>
<rect x="992.5" y="92" width="36" height="13.5" fill="#2a2a2c"/>
<rect x="993" y="94" width="35" height="10" fill="#3e3e40"/>
<rect x="1029.5" y="69.5" width="27" height="16" fill="#343436"/>
<g stroke="#777" stroke-width="0.5" fill="none"><path d="M1032 80 C1036 72 1042 75 1046 80 C1050 72 1054 76 1055 82 M1031 84 L1055 82 M1035 75 L1040 84 M1045 74 L1048 84"/></g>
<g filter="url(#nb)"><ellipse cx="1058" cy="82" rx="5" ry="3.5" fill="#f0f0f0"/><ellipse cx="1059" cy="82" rx="2.5" ry="2" fill="#222"/></g>
<rect x="1030.5" y="93" width="11.5" height="13" fill="#ececec"/>
<path d="M1032.5 97 C1033 94 1040 94 1040.5 97 L1040 100 C1041 102 1040 104 1039 104.5 L1034 104.5 C1032.5 103 1033 101 1034 100z" fill="#111"/>
<rect x="1045" y="93" width="11.3" height="13" fill="#151414"/>
<g filter="url(#nb)"><ellipse cx="1050.5" cy="99" rx="4" ry="4.5" fill="#d8d0d0"/></g>
</svg>
<div class="a" style="left:964px;top:66px;width:1px;height:49px;background:#b0b0b0"></div>
<div class="a" style="left:1020px;top:66px;width:1px;height:26px;background:#909090"></div>
<div class="a" style="left:945px;top:118px;font-size:7px;color:#222">Масштаб</div>
<div class="a" style="left:1010px;top:118px;font-size:7px;color:#222">50%</div>
<div class="a" style="left:945px;top:126px;width:83px;height:1px;background:#777"></div>
<svg class="a" style="left:976px;top:127px" width="8" height="5"><path d="M1 4.5 L4 1 L7 4.5z" fill="#fff" stroke="#222" stroke-width="0.8"/></svg>
<div class="a" style="left:945px;top:131px;font-size:7px;color:#222">Угол</div>
<div class="a" style="left:1013px;top:131px;font-size:7px;color:#222">+0°</div>
<div class="a" style="left:945px;top:139px;width:83px;height:1px;background:#777"></div>
<svg class="a" style="left:983px;top:140px" width="8" height="5"><path d="M1 4.5 L4 1 L7 4.5z" fill="#fff" stroke="#222" stroke-width="0.8"/></svg>
<svg class="a" style="left:1030px;top:118px" width="36" height="25" viewBox="0 0 36 25">
<g fill="#9c9c9c"><rect x="1" y="0.5" width="10.5" height="10"/><rect x="13" y="0.5" width="10.5" height="10"/><rect x="25" y="0.5" width="10.5" height="10"/><rect x="1" y="13.5" width="10.5" height="10.5"/><rect x="13" y="13.5" width="10.5" height="10.5"/><rect x="25" y="13.5" width="10.5" height="10.5"/></g>
<g fill="#f4f4f4"><rect x="3" y="4.8" width="6.5" height="1.5"/><rect x="15" y="4.8" width="6.5" height="1.5"/><rect x="17.5" y="2.3" width="1.5" height="6.5"/><rect x="28" y="3.5" width="4.5" height="4"/><rect x="28" y="16.8" width="4.5" height="4"/></g>
<path d="M4 18.5 a2.6 2.6 0 1 0 2.5 -2" fill="none" stroke="#f4f4f4" stroke-width="1.1"/><path d="M20 18.5 a2.6 2.6 0 1 1 -2.5 -2" fill="none" stroke="#f4f4f4" stroke-width="1.1"/>
</svg>
<div class="a" style="left:954px;top:151px;width:122px;height:9px;background:#a9a7a9"></div>
<!-- Layer panel -->
<div class="a panel" style="left:939px;top:160px;width:131px;height:358px"><span class="ptitle" style="top:3px">Слой</span></div>
<div class="a pbody" style="left:941px;top:174px;width:127px;height:341px"></div>
<div class="a" style="left:941px;top:174px;width:127px;height:120px;font-size:7px;color:#222">
<span class="a" style="left:3px;top:4px;font-size:4.5px;color:#333">&#9654;</span><span class="a" style="left:9px;top:2px;color:#8a5a52">Эффекты слоя</span>
<div class="a" style="left:2px;top:12.5px;width:123px;height:1px;background:#d8d8d8"></div>
<span class="a" style="left:3px;top:17px;font-size:4.5px;color:#333">&#9654;</span><span class="a" style="left:9px;top:15px;color:#5a4848">Текстура</span>
<div class="a" style="left:2px;top:26px;width:123px;height:1px;background:#d8d8d8"></div>
<span class="a" style="left:4px;top:31px">Режим</span>
<div class="a" style="left:31.5px;top:30px;width:91px;height:10px;background:#f6f6f6;border:1px solid #cfcfcf"><span class="a" style="left:4px;top:0">Обычный</span><div class="a" style="right:0;top:0;width:8px;height:8px;background:#a0a0a0"><div class="a" style="left:3px;top:3px;width:3px;height:2px;background:#eee"></div></div></div>
<span class="a" style="left:4px;top:43px;font-weight:bold;letter-spacing:-0.2px">Непроз.</span>
<div class="a" style="left:31.5px;top:42.5px;width:91px;height:9px;background:linear-gradient(90deg,#aaa,#b4b4b4 80%,#c8c8c8);border:1px solid #d0d0d0"><span class="a" style="right:2px;top:-0.5px;font-size:6.8px">100%</span></div>
<span class="a" style="left:4px;top:56px">Замок</span>
<svg class="a" style="left:33px;top:55px" width="48" height="10"><g fill="#e4e4e4" stroke="#d0d0d0" stroke-width="0.6"><rect x="0.5" y="0.5" width="11" height="9"/><rect x="12.5" y="0.5" width="11" height="9"/><rect x="24.5" y="0.5" width="11" height="9"/><rect x="36.5" y="0.5" width="11" height="9"/></g>
<rect x="3.5" y="2.5" width="5" height="5" fill="none" stroke="#666" stroke-width="0.6" stroke-dasharray="1 0.6"/><path d="M15 8 l5 -5" stroke="#555" stroke-width="0.8"/><path d="M30 1.5 v7 M26.5 5 h7" stroke="#222" stroke-width="0.9"/><rect x="39.5" y="3.5" width="5" height="4" fill="#777"/></svg>
<div class="a" style="left:5px;top:68px;width:7px;height:7px;background:#f6f6f6;border:1px solid #c4c4c4"></div>
<span class="a" style="left:14px;top:68px">Прикрепление</span>
<div class="a" style="left:5px;top:78.5px;width:8px;height:8px;border-radius:50%;background:#f6f6f6;border:1px solid #c4c4c4"></div>
<span class="a" style="left:14px;top:78px">Источник выбора</span>
</div>
<div class="a" style="left:943.5px;top:262.5px;width:123px;height:251px;background:#cbcbcb;border:1px solid #d4d4d4"></div>
<div class="a" style="left:944.5px;top:263.5px;width:121px;height:28px;background:#ececec"></div>
<svg class="a" style="left:944px;top:264px" width="122" height="28" viewBox="0 0 122 28">
<g fill="#fafafa" stroke="#555" stroke-width="0.7"><path d="M4 3.5 h5 l2.5 2.5 v6.5 h-7.5z"/><path d="M18 3.5 h5 l2.5 2.5 v6.5 h-7.5z"/><rect x="31.5" y="3.5" width="7.5" height="9" fill="#ddd" stroke="#aaa"/></g>
<path d="M21 11 l4 -5" stroke="#333" stroke-width="0.8"/>
<path d="M60 4 v8 M57 9 l5 -3 M58 12 h5" stroke="#333" stroke-width="0.8"/>
<rect x="107" y="3.5" width="10" height="9" fill="#9a9a9a"/><circle cx="112" cy="8" r="2.5" fill="#f4f4f4"/>
<g fill="#fafafa" stroke="#555" stroke-width="0.7"><rect x="4" y="16" width="7" height="8"/><rect x="18" y="16" width="7" height="8"/><rect x="31.5" y="16" width="7.5" height="8"/></g>
<path d="M7.5 17 v6 M5.5 21 l2 2 l2 -2 M19.5 20 h4 M21.5 18 v4 M34 22 l4 -5" stroke="#222" stroke-width="0.7" fill="none"/>
<path d="M46 17 h8 M47 18 h6 l-0.7 6 h-4.6z" fill="#888" stroke="#666" stroke-width="0.6"/>
<rect x="107" y="16" width="10" height="9" fill="#e4e4e4" stroke="#ccc" stroke-width="0.5"/>
</svg>
<div class="a" style="left:946.5px;top:292.6px;width:107px;height:23px;background:#ececec;border:1px solid #cacaca"><div class="a" style="left:1.5px;top:1.5px;width:11px;height:9.5px;background:#f2f2f2;border:1px solid #d6d6d6"></div><div class="a" style="left:1.5px;top:11.5px;width:11px;height:9.5px;background:#f2f2f2;border:1px solid #d6d6d6"></div><svg class="a" style="left:3px;top:3px" width="9" height="7"><path d="M0.5 3.5 q4 -4 8 0 q-4 4 -8 0z" fill="#222"/><circle cx="4.5" cy="3.5" r="1.3" fill="#eee"/><path d="M0 1 h9" stroke="#222" stroke-width="0.7"/></svg><div class="a" style="left:14px;top:0.5px;width:19px;height:21px;background:linear-gradient(#c4c4c4 0,#c4c4c4 35%,#ebebeb 35%,#ebebeb 65%,#c4c4c4 65%)"></div><span class="a" style="left:35px;top:0px;font-size:6.8px;color:#222">Слой15</span><span class="a" style="left:35px;top:7.5px;font-size:5.3px;color:#222;font-weight:bold">Обычный</span><span class="a" style="left:35px;top:14px;font-size:5.3px;color:#222;font-weight:bold">100%</span></div>
<div class="a" style="left:946.5px;top:316.3px;width:107px;height:23px;background:#ececec;border:1px solid #cacaca"><div class="a" style="left:1.5px;top:1.5px;width:11px;height:9.5px;background:#f2f2f2;border:1px solid #d6d6d6"></div><div class="a" style="left:1.5px;top:11.5px;width:11px;height:9.5px;background:#f2f2f2;border:1px solid #d6d6d6"></div><svg class="a" style="left:3px;top:3px" width="9" height="7"><path d="M0.5 3.5 q4 -4 8 0 q-4 4 -8 0z" fill="#222"/><circle cx="4.5" cy="3.5" r="1.3" fill="#eee"/><path d="M0 1 h9" stroke="#222" stroke-width="0.7"/></svg><div class="a" style="left:14px;top:0.5px;width:19px;height:21px;background:linear-gradient(#c4c4c4 0,#c4c4c4 35%,#ebebeb 35%,#ebebeb 65%,#c4c4c4 65%)"></div><span class="a" style="left:35px;top:0px;font-size:6.8px;color:#222">Слой14</span><span class="a" style="left:35px;top:7.5px;font-size:5.3px;color:#b050a0;font-weight:normal">Shade/Shine</span><span class="a" style="left:35px;top:14px;font-size:5.3px;color:#222;font-weight:bold">100%</span></div>
<div class="a" style="left:946.5px;top:340.0px;width:107px;height:23px;background:#ececec;border:1px solid #cacaca"><div class="a" style="left:1.5px;top:1.5px;width:11px;height:9.5px;background:#f2f2f2;border:1px solid #d6d6d6"></div><div class="a" style="left:1.5px;top:11.5px;width:11px;height:9.5px;background:#f2f2f2;border:1px solid #d6d6d6"></div><svg class="a" style="left:3px;top:3px" width="9" height="7"><path d="M0.5 3.5 q4 -4 8 0 q-4 4 -8 0z" fill="#222"/><circle cx="4.5" cy="3.5" r="1.3" fill="#eee"/><path d="M0 1 h9" stroke="#222" stroke-width="0.7"/></svg><div class="a" style="left:14px;top:0.5px;width:19px;height:21px;background:linear-gradient(#c4c4c4 0,#c4c4c4 35%,#ebebeb 35%,#ebebeb 65%,#c4c4c4 65%)"></div><span class="a" style="left:35px;top:0px;font-size:6.8px;color:#222">Слой13</span><span class="a" style="left:35px;top:7.5px;font-size:5.3px;color:#222;font-weight:bold">Обычный</span><span class="a" style="left:35px;top:14px;font-size:5.3px;color:#222;font-weight:bold">100%</span></div>
<div class="a" style="left:946.5px;top:363.7px;width:107px;height:23px;background:#ececec;border:1px solid #cacaca"><div class="a" style="left:1.5px;top:1.5px;width:11px;height:9.5px;background:#f2f2f2;border:1px solid #d6d6d6"></div><div class="a" style="left:1.5px;top:11.5px;width:11px;height:9.5px;background:#f2f2f2;border:1px solid #d6d6d6"></div><div class="a" style="left:14px;top:0.5px;width:19px;height:21px;background:linear-gradient(#c4c4c4 0,#c4c4c4 35%,#ebebeb 35%,#ebebeb 65%,#c4c4c4 65%)"></div><div class="a" style="left:27px;top:10px;width:1px;height:1px;background:#222"></div><span class="a" style="left:35px;top:0px;font-size:6.8px;color:#222">Слой12</span><span class="a" style="left:35px;top:7.5px;font-size:5.3px;color:#222;font-weight:bold">Обычный</span><span class="a" style="left:35px;top:14px;font-size:5.3px;color:#222;font-weight:bold">100%</span></div>
<div class="a" style="left:946.5px;top:387.4px;width:107px;height:23px;background:#ececec;border:1px solid #cacaca"><div class="a" style="left:1.5px;top:1.5px;width:11px;height:9.5px;background:#f2f2f2;border:1px solid #d6d6d6"></div><div class="a" style="left:1.5px;top:11.5px;width:11px;height:9.5px;background:#f2f2f2;border:1px solid #d6d6d6"></div><svg class="a" style="left:3px;top:3px" width="9" height="7"><path d="M0.5 3.5 q4 -4 8 0 q-4 4 -8 0z" fill="#222"/><circle cx="4.5" cy="3.5" r="1.3" fill="#eee"/><path d="M0 1 h9" stroke="#222" stroke-width="0.7"/></svg><div class="a" style="left:14px;top:0.5px;width:19px;height:21px;background:linear-gradient(#c4c4c4 0,#c4c4c4 35%,#ebebeb 35%,#ebebeb 65%,#c4c4c4 65%)"></div><span class="a" style="left:35px;top:0px;font-size:6.8px;color:#222">Слой10</span><span class="a" style="left:35px;top:7.5px;font-size:5.3px;color:#222;font-weight:bold">Обычный</span><span class="a" style="left:35px;top:14px;font-size:5.3px;color:#222;font-weight:bold">100%</span></div>
<div class="a" style="left:946.5px;top:410.4px;width:107px;height:23px;background:#d8d8f2;border:1px solid #a4a4d8"><div class="a" style="left:1.5px;top:1.5px;width:11px;height:9.5px;background:#f2f2f2;border:1px solid #d6d6d6"></div><div class="a" style="left:1.5px;top:11.5px;width:11px;height:9.5px;background:#f2f2f2;border:1px solid #d6d6d6"></div><svg class="a" style="left:3px;top:3px" width="9" height="7"><path d="M0.5 3.5 q4 -4 8 0 q-4 4 -8 0z" fill="#222"/><circle cx="4.5" cy="3.5" r="1.3" fill="#eee"/><path d="M0 1 h9" stroke="#222" stroke-width="0.7"/></svg><svg class="a" style="left:3px;top:13px" width="9" height="7"><path d="M1 6.5 l6 -6" stroke="#666" stroke-width="0.8"/></svg><div class="a" style="left:14px;top:0.5px;width:19px;height:21px;background:linear-gradient(#c4c4c4 0,#c4c4c4 35%,#ebebeb 35%,#ebebeb 65%,#c4c4c4 65%)"></div><div class="a" style="left:21px;top:8px;width:5px;height:4px;background:#222"></div><span class="a" style="left:35px;top:0px;font-size:6.8px;color:#222">Слой18</span><span class="a" style="left:35px;top:7.5px;font-size:5.3px;color:#222;font-weight:bold">Обычный</span><span class="a" style="left:35px;top:14px;font-size:5.3px;color:#222;font-weight:bold">100%</span></div>
<div class="a" style="left:946.5px;top:434.1px;width:107px;height:23px;background:#ececec;border:1px solid #cacaca"><div class="a" style="left:1.5px;top:1.5px;width:11px;height:9.5px;background:#f2f2f2;border:1px solid #d6d6d6"></div><div class="a" style="left:1.5px;top:11.5px;width:11px;height:9.5px;background:#f2f2f2;border:1px solid #d6d6d6"></div><svg class="a" style="left:3px;top:3px" width="9" height="7"><path d="M0.5 3.5 q4 -4 8 0 q-4 4 -8 0z" fill="#222"/><circle cx="4.5" cy="3.5" r="1.3" fill="#eee"/><path d="M0 1 h9" stroke="#222" stroke-width="0.7"/></svg><div class="a" style="left:14px;top:0.5px;width:19px;height:21px;background:linear-gradient(#c4c4c4 0,#c4c4c4 35%,#ebebeb 35%,#ebebeb 65%,#c4c4c4 65%)"></div><span class="a" style="left:35px;top:0px;font-size:6.8px;color:#222">Слой17</span><span class="a" style="left:35px;top:7.5px;font-size:5.3px;color:#222;font-weight:bold">Обычный</span><span class="a" style="left:35px;top:14px;font-size:5.3px;color:#222;font-weight:bold">100%</span></div>
<div class="a" style="left:946.5px;top:457.8px;width:107px;height:23px;background:#ececec;border:1px solid #cacaca"><div class="a" style="left:1.5px;top:1.5px;width:11px;height:9.5px;background:#f2f2f2;border:1px solid #d6d6d6"></div><div class="a" style="left:1.5px;top:11.5px;width:11px;height:9.5px;background:#f2f2f2;border:1px solid #d6d6d6"></div><svg class="a" style="left:3px;top:3px" width="9" height="7"><path d="M0.5 3.5 q4 -4 8 0 q-4 4 -8 0z" fill="#222"/><circle cx="4.5" cy="3.5" r="1.3" fill="#eee"/><path d="M0 1 h9" stroke="#222" stroke-width="0.7"/></svg><div class="a" style="left:14px;top:0.5px;width:19px;height:21px;background:linear-gradient(#c4c4c4 0,#c4c4c4 35%,#ebebeb 35%,#ebebeb 65%,#c4c4c4 65%)"></div><span class="a" style="left:35px;top:0px;font-size:6.8px;color:#222">Слой16</span><span class="a" style="left:35px;top:7.5px;font-size:5.3px;color:#222;font-weight:bold">Обычный</span><span class="a" style="left:35px;top:14px;font-size:5.3px;color:#222;font-weight:bold">100%</span></div>
<div class="a" style="left:946.5px;top:481.5px;width:107px;height:23px;background:#ececec;border:1px solid #cacaca"><div class="a" style="left:1.5px;top:1.5px;width:11px;height:9.5px;background:#f2f2f2;border:1px solid #d6d6d6"></div><div class="a" style="left:1.5px;top:11.5px;width:11px;height:9.5px;background:#f2f2f2;border:1px solid #d6d6d6"></div><svg class="a" style="left:3px;top:3px" width="9" height="7"><path d="M0.5 3.5 q4 -4 8 0 q-4 4 -8 0z" fill="#222"/><circle cx="4.5" cy="3.5" r="1.3" fill="#eee"/><path d="M0 1 h9" stroke="#222" stroke-width="0.7"/></svg><div class="a" style="left:14px;top:0.5px;width:19px;height:21px;background:linear-gradient(#c4c4c4 0,#c4c4c4 35%,#ebebeb 35%,#ebebeb 65%,#c4c4c4 65%)"></div><div class="a" style="left:27px;top:10px;width:1px;height:1px;background:#222"></div><span class="a" style="left:35px;top:0px;font-size:6.8px;color:#222">Слой11</span><span class="a" style="left:35px;top:7.5px;font-size:5.3px;color:#222;font-weight:bold">Обычный</span><span class="a" style="left:35px;top:14px;font-size:5.3px;color:#222;font-weight:bold">100%</span></div>

<div class="a" style="left:1056px;top:293px;width:9px;height:210px;background:#e2e2e2"></div>
<div class="a" style="left:1056px;top:293.5px;width:9px;height:7px;background:#9c9c9c"><div class="a" style="left:3px;top:2.5px;width:3px;height:2px;background:#eee"></div></div>
<div class="a" style="left:1056px;top:301px;width:9px;height:114px;background:#9a9a9a"></div>
<div class="a" style="left:1056px;top:496px;width:9px;height:7px;background:#9c9c9c"><div class="a" style="left:3px;top:2.5px;width:3px;height:2px;background:#eee"></div></div>
<div class="a" style="left:944.5px;top:504px;width:121px;height:9px;background:#e6e6e6"></div>
<div class="a" style="left:947px;top:505px;width:7px;height:7px;background:#dedede"></div>
<div class="a" style="left:1045px;top:505px;width:7px;height:7px;background:#dedede"></div>
<!-- bottom scroll / status -->
<div class="a" style="left:6px;top:538px;width:1070px;height:10px;background:#dedcdc"></div>
<div class="a" style="left:6px;top:539px;width:8px;height:8px;background:#9c9c9c"><div class="a" style="left:3px;top:2.5px;width:0;height:0;border-right:2.5px solid #eee;border-top:1.5px solid transparent;border-bottom:1.5px solid transparent"></div></div>
<div class="a" style="left:358.5px;top:539px;width:511px;height:9px;background:#9a9a9a;border-radius:1px"></div>
<div class="a" style="left:1068px;top:539px;width:8px;height:8px;background:#9c9c9c"><div class="a" style="left:3px;top:2.5px;width:0;height:0;border-left:2.5px solid #eee;border-top:1.5px solid transparent;border-bottom:1.5px solid transparent"></div></div>
<div class="a" style="left:3px;top:548px;width:1077px;height:1px;background:#e2b49a"></div>
<div class="a" style="left:3px;top:549px;width:1082px;height:28px;background:#e8e8e8"></div>
<div class="a" style="left:3px;top:567px;width:1082px;height:1px;background:#dadada"></div>
<div class="a" style="left:5px;top:551px;width:60px;height:15px;background:#d8d8f0;border:1px solid #b0b0d8"></div>
<div class="a" style="left:8px;top:553px;width:10px;height:10px;background:linear-gradient(135deg,#3a8a5a,#d8e060 60%,#3a7aa0);border:1px solid #556"></div>
<span class="a" style="left:20px;top:554px;font-size:8px;color:#222">Xryoun</span>
<span class="a" style="left:840px;top:571px;font-size:7px;color:#333">Память занято</span>
<div class="a" style="left:889px;top:569px;width:70px;height:9px;background:#f0f0f0;border:1px solid #c8c8c8"></div>
<div class="a" style="left:890px;top:570px;width:16px;height:8px;background:#60c090"></div>
<span class="a" style="left:891px;top:571px;font-size:6.5px;color:#333">36%</span><span class="a" style="left:908px;top:571px;font-size:6.5px;color:#333">(21%)</span>
<span class="a" style="left:965px;top:571px;font-size:7px;color:#333">Место диска</span>
<div class="a" style="left:1007px;top:569px;width:70px;height:9px;background:#f0f0f0;border:1px solid #c8c8c8"></div>
<div class="a" style="left:1008px;top:570px;width:52px;height:8px;background:#4aa8e0"></div>
<span class="a" style="left:1009px;top:571px;font-size:6.5px;color:#223">35%</span>
<div class="a" style="left:1078px;top:551px;width:8px;height:7px;background:#d6d6d6"></div>
<div class="a" style="left:1078px;top:559px;width:8px;height:7px;background:#d6d6d6"></div>
<!-- right v-scroll -->
<div class="a" style="left:1076px;top:39px;width:9px;height:499px;background:#e4e2e2"></div>
<div class="a" style="left:1077px;top:40px;width:8px;height:8px;background:#a4a4a4"><div class="a" style="left:2.5px;top:3px;width:3px;height:2px;background:#eee"></div></div>
<div class="a" style="left:1077.5px;top:154.5px;width:7px;height:259px;background:#9a9a9a"></div>
<div class="a" style="left:1077px;top:530px;width:8px;height:8px;background:#9c9c9c"><div class="a" style="left:2.5px;top:3px;width:3px;height:2px;background:#eee"></div></div>
<div class="a" style="left:1085px;top:39px;width:5px;height:538px;background:#eee8e4"></div>
<div class="a" style="left:0;top:23px;width:3px;height:554px;background:#f4f4f4"></div>
<div class="a" style="left:3px;top:39px;width:3px;height:510px;background:#e8dcd6"></div>

<!-- webcam -->
<div class="a" style="left:33px;top:434px;width:153px;height:142px;overflow:hidden;background:
radial-gradient(ellipse 20px 50px at 145px 70px,rgba(90,66,44,.6),transparent),
radial-gradient(ellipse 40px 25px at 95px 15px,rgba(56,44,32,.5),transparent),
linear-gradient(90deg,#170f0c,#1a130f 50%,#22180f)"><div class="a" style="left:0;top:0;width:153px;height:142px;filter:blur(0.8px)">
 <div class="a" style="left:0;top:0;width:32px;height:52px;background:linear-gradient(90deg,#7a2a20,#642218 60%,#401612)"></div>
 <div class="a" style="left:0;top:51px;width:32px;height:2px;background:#d8a070"></div>
 <div class="a" style="left:0;top:53px;width:30px;height:14px;background:repeating-linear-gradient(90deg,#5a2a20 0 4px,#b07a60 4px 7px,#3a1a14 7px 10px)"></div>
 <div class="a" style="left:0;top:67px;width:24px;height:75px;background:linear-gradient(#1e1a18,#2a2220)"></div>
 <div class="a" style="left:5px;top:100px;width:8px;height:42px;background:linear-gradient(90deg,#4a3020,#7a5030)"></div>
 <div class="a" style="left:24px;top:56px;width:50px;height:86px;border-radius:10px 10px 0 0;background:linear-gradient(90deg,#121010,#1e1b1b 50%,#141212)"></div>
 <div class="a" style="left:130px;top:20px;width:23px;height:100px;background:repeating-linear-gradient(#2a1e14 0 6px,#4a3624 6px 10px,#2e2016 10px 16px)"></div>
 <div class="a" style="left:60px;top:92px;width:100px;height:56px;border-radius:40px 40px 0 0;background:#121010"></div>
  <div class="a" style="left:79px;top:78px;width:30px;height:22px;border-radius:0 0 15px 15px;background:linear-gradient(#8a6248,#a87a5c)"></div>
 <div class="a" style="left:75px;top:35px;width:39px;height:51px;border-radius:45% 45% 50% 50%;background:radial-gradient(ellipse 18px 22px at 19px 24px,#d49c70,#b88058 65%,#8a5a3c)"></div>
 <div class="a" style="left:73px;top:29px;width:40px;height:13px;border-radius:50% 50% 25% 25%;background:linear-gradient(#3a2416,#6a4428)"></div>
 <div class="a" style="left:72px;top:36px;width:5px;height:24px;border-radius:40%;background:#4a2e1c"></div>
 <div class="a" style="left:111px;top:36px;width:4px;height:20px;border-radius:40%;background:#4a2e1c"></div>
 <div class="a" style="left:83px;top:54px;width:8px;height:2px;background:#7a4a34"></div><div class="a" style="left:98px;top:54px;width:8px;height:2px;background:#7a4a34"></div>
 <div class="a" style="left:89px;top:71px;width:11px;height:3px;border-radius:2px;background:#8a5440"></div>
<div class="a" style="left:56px;top:118px;width:30px;height:26px;border-radius:50% 40% 0 0;background:radial-gradient(ellipse at 60% 40%,#b48a6a,#7a5440)"></div>
 </div><span class="a" style="left:76px;top:131px;font-size:6px;color:#ddd">Tod</span>
</div>
<div class="a" id="band"></div>
<div class="a" id="brand">SMIRNOV SCHOOL</div>
</body></html>
